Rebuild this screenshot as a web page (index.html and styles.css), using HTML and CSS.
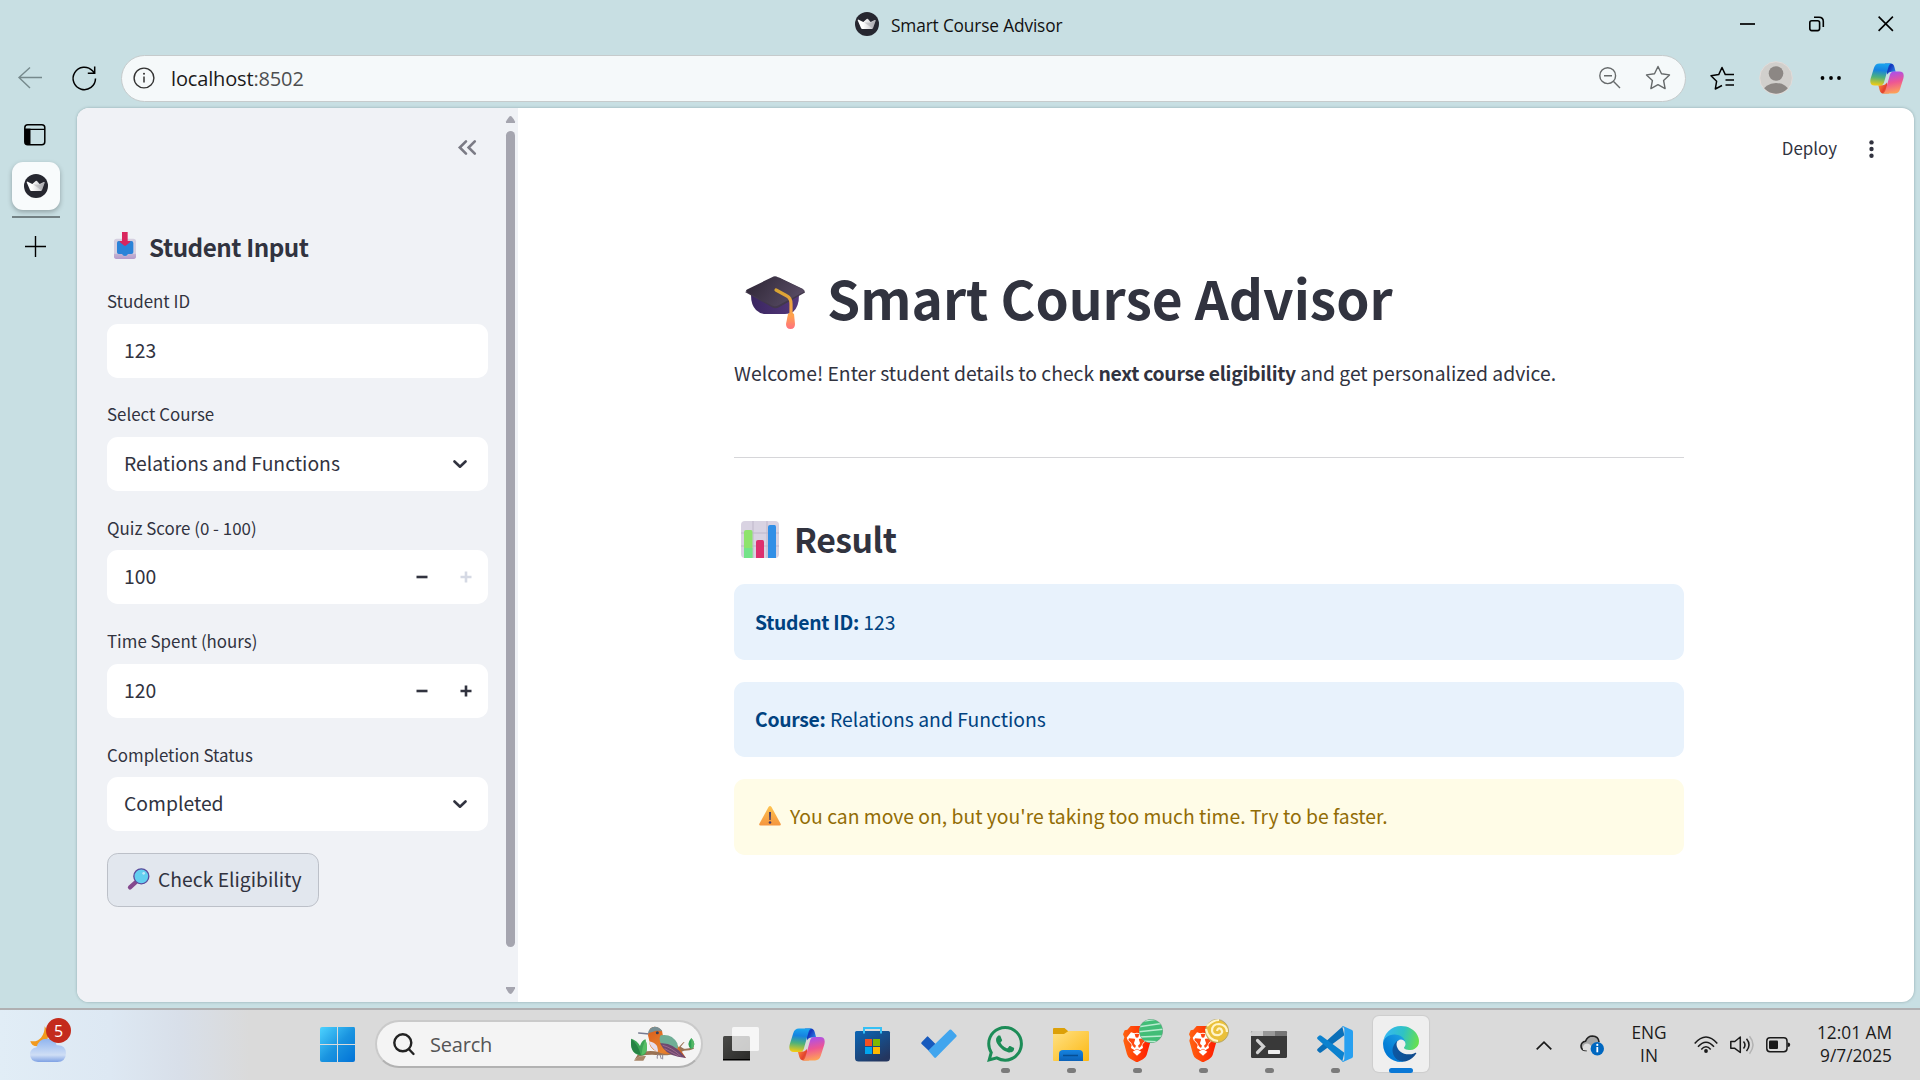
FILE: index.html
```html
<!DOCTYPE html>
<html lang="en">
<head>
<meta charset="utf-8">
<title>Smart Course Advisor</title>
<link rel="stylesheet" href="styles.css">
</head>
<body>
<svg class="defs" width="0" height="0">
  <defs>
    <linearGradient id="cp-a" x1="0.4" y1="0" x2="0.3" y2="1"><stop offset="0" stop-color="#1ba4ee"/><stop offset=".3" stop-color="#1683e0"/><stop offset=".62" stop-color="#4db17c"/><stop offset="1" stop-color="#f5cc10"/></linearGradient>
    <linearGradient id="cp-b" x1="0" y1="0" x2="1" y2=".6"><stop offset="0" stop-color="#1a5fe0"/><stop offset=".5" stop-color="#1537bd"/><stop offset="1" stop-color="#2b7fe6"/></linearGradient>
    <linearGradient id="cp-c" x1="0.6" y1="1" x2="0.4" y2="0"><stop offset="0" stop-color="#a64ff0"/><stop offset=".5" stop-color="#ee5693"/><stop offset="1" stop-color="#ffa653"/></linearGradient>
    <linearGradient id="cp-d" x1="0" y1="0" x2="1" y2=".6"><stop offset="0" stop-color="#f2a13c"/><stop offset=".5" stop-color="#e2412f"/><stop offset="1" stop-color="#fb7c36"/></linearGradient>
    <linearGradient id="crown" x1="0" y1="0" x2="1" y2="0"><stop offset=".3" stop-color="#fff"/><stop offset="1" stop-color="#b9b9be"/></linearGradient>
    <symbol id="copilot" viewBox="0 0 102 92">
      <path fill="url(#cp-b)" d="M45 1H62q8 0 11 10L77 26H64q-9 0-12 8z"/>
      <path fill="url(#cp-d)" transform="rotate(180 51 46)" d="M45 1H62q8 0 11 10L77 26H64q-9 0-12 8z"/>
      <path fill="url(#cp-a)" d="M66 1H28Q16 1 12 14L2 46Q-3 67 14 67H30q9 0 12-9L55 12Q58 1 66 1z"/>
      <path fill="url(#cp-c)" transform="rotate(180 51 46)" d="M66 1H28Q16 1 12 14L2 46Q-3 67 14 67H30q9 0 12-9L55 12Q58 1 66 1z"/>
    </symbol>
    <symbol id="streamlit" viewBox="0 0 72 72">
      <circle cx="36" cy="36" r="36" fill="#262730"/>
      <path fill="url(#crown)" d="M8 25q0-3 3-2l14 7 10-9q2-2 4 0l8 9 12-6q4-1 3 2l-8 22q-1 3-4 3H22q-3 0-4-3z"/>
      <path fill="#8b8b91" opacity=".35" d="M27 31l27 19 7-24-15 6z"/>
    </symbol>
    <linearGradient id="br-g" x1="0" x2="1"><stop offset="0" stop-color="#ff6410"/><stop offset="1" stop-color="#ff1a00"/></linearGradient>
    <symbol id="brave" viewBox="0 0 84 108">
      <path fill="url(#br-g)" d="M23 0H63L72 11l8 1 4 13-3 9 2 10-12 43q-3 8-11 13L44 108Q42 109 38 107L22 98Q14 93 12 85L1 44l3-10-4-9 5-12 8-2z"/>
      <path fill="#fff" d="M24 19l10 3q8-3 16 0l10-3 13 16-3 8-11 12q-2 3 0 6l1 5-11 7q-4-4-7-5-3 1-7 5l-11-7 1-5q2-3 0-6L14 43l-3-8z"/>
      <path fill="#ff4a10" d="M18 37l17 1q2 1 1 4l-3 9q0 3 3 5l3 3-3 7q-7-4-8-8-1-4-4-8L16 42zM66 37l-17 1q-2 1-1 4l3 9q0 3-3 5l-3 3 3 7q7-4 8-8 1-4 4-8l10-8z"/>
      <path fill="#ff4310" d="M35 24q7-2 14 0l-3 10q-4 2-8 0z"/>
      <path fill="#fff" d="M29 77l13-7 13 7-13 12z"/>
    </symbol>
    <symbol id="minus" viewBox="0 0 12 12"><path d="M.5 4.700h11v2.600H.5z" fill="currentColor"/></symbol>
    <symbol id="plus" viewBox="0 0 12 12"><path d="M4.700.500h2.600v4.200h4.200v2.600H7.300v4.200H4.700V7.300H.5V4.700h4.200z" fill="currentColor"/></symbol>
    <symbol id="chev" viewBox="0 0 14 9"><path d="M1.500 1.500 7 6.700l5.500-5.200" fill="none" stroke="currentColor" stroke-width="2.600" stroke-linecap="round" stroke-linejoin="round"/></symbol>
  </defs>
</svg>

<header class="titlebar">
  <svg class="i24"><use href="#streamlit"/></svg>
  <span class="tab-title">Smart Course Advisor</span>
  <div class="win-buttons">
    <svg width="16" height="16"><path d="M0 8h15" stroke="#000" stroke-width="1.700"/></svg>
    <svg width="16" height="16" fill="none" stroke="#000" stroke-width="1.600"><rect x=".8" y="4.800" width="9.800" height="9.800" rx="2"/><path d="M5 1.200h5q4.300 0 4.300 4.300V11"/></svg>
    <svg width="16" height="16"><path d="M.6.600l14.300 14.300M14.900.600.600 14.900" stroke="#000" stroke-width="1.600"/></svg>
  </div>
</header>

<div class="toolbar">
  <svg class="back" width="24" height="22" fill="none" stroke="#76898c" stroke-width="1.400"><path d="M24 10.500H1M12 .6 1 10.500 12 21"/></svg>
  <svg class="reload" width="25" height="25" fill="none" stroke="#000" stroke-width="1.500"><path d="M23.500 12.500A11.200 11.200 0 1 1 20.500 4.800L22.500 7M22.700.600v6.700h-6.900"/></svg>
  <div class="address">
    <svg width="22" height="22"><circle cx="11" cy="11" r="9.900" fill="none" stroke="#333" stroke-width="1.400"/><path d="M11 9.500v6" stroke="#333" stroke-width="1.500"/><circle cx="11" cy="6.800" r="1" fill="#333"/></svg>
    <span class="url">localhost<span class="port">:8502</span></span>
    <svg class="zoom" width="22" height="22" fill="none" stroke="#666a6b" stroke-width="1.400"><circle cx="8.700" cy="8.700" r="7.900"/><path d="M5 8.700h8M14.300 14.300 21 21"/></svg>
    <svg width="26" height="26" viewBox="0 0 26 26" fill="none" stroke="#666a6b" stroke-width="1.400" stroke-linejoin="round"><path d="M13 1.500l3.500 7.300 8 1.100-5.900 5.600 1.500 8.100-7.100-3.900-7.100 3.900 1.500-8.100L1.500 9.900l8-1.100z"/></svg>
  </div>
  <div class="tools">
    <svg width="26" height="26" viewBox="0 0 26 26" fill="none" stroke="#000" stroke-width="1.500" stroke-linejoin="round"><path d="M13 20.500 6.300 24l1.300-7.700L2 10.700l7.700-1.100L13 2.500l3.300 7.100H25M16.500 15H25M16.500 20H25"/></svg>
    <svg width="34" height="34"><defs><clipPath id="av"><circle cx="17" cy="17" r="15.700"/></clipPath></defs><circle cx="17" cy="17" r="16.300" fill="#d1cfcc" stroke="#e2dcda"/><circle cx="17" cy="12.500" r="7.300" fill="#8c8784"/><ellipse cx="17" cy="31" rx="13" ry="9" fill="#8c8784" clip-path="url(#av)"/></svg>
    <svg width="22" height="6"><circle cx="2.500" cy="3" r="1.900"/><circle cx="11" cy="3" r="1.900"/><circle cx="19" cy="3" r="1.900"/></svg>
    <svg width="34" height="31"><use href="#copilot"/></svg>
  </div>
</div>

<div class="body">
  <nav class="rail">
    <svg width="22" height="22"><rect x=".8" y=".8" width="20" height="20" rx="3" fill="none" stroke="#000" stroke-width="1.500"/><path d="M1 4.500h5.500V21H4Q1 21 1 18zM1 4.700h20v1.200H1z"/></svg>
    <div class="tab-tile"><svg class="i24"><use href="#streamlit"/></svg></div>
    <div class="tab-line"></div>
    <svg width="21" height="21"><path d="M10.500 0v21M0 10.500h21" stroke="#000" stroke-width="1.400"/></svg>
  </nav>

  <div class="page">
    <aside class="sidebar">
      <div class="side-content">
        <div class="collapse"><svg width="18" height="15" fill="none" stroke="#7b7b85" stroke-width="2.600" stroke-linecap="round"><path d="M8 1.300 1.800 7.500 8 13.700M16.800 1.300 10.600 7.500l6.200 6.200"/></svg></div>
        <h2 class="side-title">
          <svg width="22" height="27" viewBox="0 0 66 81"><defs><linearGradient id="tr" x1="0" y1="0" x2="0" y2="1"><stop offset=".7" stop-color="#d5cfe0"/><stop offset="1" stop-color="#b497cf"/></linearGradient></defs><rect y="20" width="66" height="61" rx="8" fill="url(#tr)"/><path fill="#2a83d8" d="M14 27h38q6 0 6 6v28q0 5-6 5H42q-2 6-9 6t-9-6H14q-5 0-5-5V33q0-6 5-6z"/><path fill="#b6a0c8" d="M0 66h24q2 9 9 9t9-9h24v7q0 8-8 8H8q-8 0-8-8z" opacity=".5"/><path fill="#d9265e" d="M24 0h17v27h7q2 2 0 4L35 41q-2 1-4 0L18 31q-2-3 0-4h6z"/></svg>
          Student Input
        </h2>
        <div class="field"><label>Student ID</label><div class="control">123</div></div>
        <div class="field"><label>Select Course</label><div class="control select">Relations and Functions<svg width="14" height="9"><use href="#chev"/></svg></div></div>
        <div class="field"><label>Quiz Score (0 - 100)</label><div class="control number">100<span class="steps"><svg width="12" height="12"><use href="#minus"/></svg><svg class="off" width="12" height="12"><use href="#plus"/></svg></span></div></div>
        <div class="field"><label>Time Spent (hours)</label><div class="control number">120<span class="steps"><svg width="12" height="12"><use href="#minus"/></svg><svg width="12" height="12"><use href="#plus"/></svg></span></div></div>
        <div class="field"><label>Completion Status</label><div class="control select">Completed<svg width="14" height="9"><use href="#chev"/></svg></div></div>
        <button class="check">
          <svg width="22" height="22" viewBox="0 0 66 66"><path d="M6 58 24 42" stroke="#85498d" stroke-width="13" stroke-linecap="round"/><circle cx="40" cy="25" r="22.500" fill="#62cff0" stroke="#5a4b9c" stroke-width="4"/><circle cx="47" cy="16" r="4" fill="#bdeafa"/></svg>
          Check Eligibility
        </button>
      </div>
      <div class="scroll">
        <svg width="9" height="7"><path d="M4.500 0Q6 0 9 5.500V7H0V5.500Q3 0 4.500 0z" fill="#a5a5af"/></svg>
        <div class="thumb"></div>
        <svg width="9" height="7"><path d="M4.500 7Q6 7 9 1.500V0H0v1.500Q3 7 4.500 7z" fill="#a5a5af"/></svg>
      </div>
    </aside>

    <main class="main">
      <div class="topline">
        <span>Deploy</span>
        <svg width="5" height="18" fill="#31333f"><circle cx="2.500" cy="2.400" r="2.200"/><circle cx="2.500" cy="9" r="2.200"/><circle cx="2.500" cy="15.700" r="2.200"/></svg>
      </div>
      <div class="column">
        <h1>
          <svg width="60" height="53" viewBox="0 0 60 53"><defs><linearGradient id="cap1" x1="0" y1="0" x2="1" y2=".4"><stop offset="0" stop-color="#2c2433"/><stop offset="1" stop-color="#564a62"/></linearGradient><linearGradient id="cap2" x1="0" x2="1"><stop offset="0" stop-color="#3a2660"/><stop offset="1" stop-color="#55397c"/></linearGradient><linearGradient id="tas" gradientUnits="userSpaceOnUse" x1="0" y1="14" x2="0" y2="53"><stop offset="0" stop-color="#d7a432"/><stop offset=".65" stop-color="#ffa24c"/><stop offset="1" stop-color="#ff7280"/></linearGradient></defs><path fill="url(#cap2)" d="M6 19h48q0 12-6 17-3 2-8 2H21q-6 0-10-4-5-5-5-15z"/><path fill="#42384b" d="M0 16 27.500 31.500q3 1.600 6 0L60 16.500Q60 14 57 12.500L34 1.500z"/><path fill="url(#cap1)" d="M2 13.500 27 1.200Q30-.5 33 1.200L58 13.500q2 1.300 0 2.700L33 29.500q-3 1.500-6 0L2 16q-2-1.200 0-2.500z"/><path d="M31 14l11 6q4 2 4 8v11" fill="none" stroke="url(#tas)" stroke-width="3.200" stroke-linecap="round"/><path fill="url(#tas)" d="M43 38q3-3 6 0l1 10q0 5-4.500 5T41 48z"/></svg>
          Smart Course Advisor
        </h1>
        <p>Welcome! Enter student details to check <b>next course eligibility</b> and get personalized advice.</p>
        <hr>
        <h2 class="result">
          <svg width="38" height="37"><rect width="38" height="37" rx="4" fill="#d9d3e2"/><path d="M0 12h38M0 25h38M12 0v37M26 0v37" stroke="#bfb7ca"/><path d="M3 11q0-2 2-2h5q1.500 0 1.500 2v26H3z" fill="#8ee36c"/><path d="M15 21q0-2 2-2h4.500q1.500 0 1.500 2v16h-8z" fill="#dd2f6e"/><path d="M27 6q0-2 2-2h4.500Q35 4 35 6v31h-8z" fill="#318fe6"/><path d="M3 27h8.500v10H3z" fill="#6ae394" opacity=".7"/></svg>
          Result
        </h2>
        <div class="alerts">
          <div class="alert info"><span><b>Student ID:</b> 123</span></div>
          <div class="alert info"><span><b>Course:</b> Relations and Functions</span></div>
          <div class="alert warn">
            <svg width="22" height="20"><defs><linearGradient id="wn" x1="0" y1="0" x2="0" y2="1"><stop offset="0" stop-color="#fec34f"/><stop offset="1" stop-color="#f5953f"/></linearGradient></defs><path fill="url(#wn)" d="M9.500 1q1.500-2 3 0l9 16.500q1 2-1 2h-19q-2 0-1-2z"/><path d="M10 6h2l-.3 8h-1.400z" fill="#433b6b"/><circle cx="11" cy="16.500" r="1.300" fill="#433b6b"/></svg>
            You can move on, but you're taking too much time. Try to be faster.
          </div>
        </div>
      </div>
    </main>
  </div>
</div>

<footer class="taskbar">
  <div class="weather">
    <svg width="36" height="37" viewBox="0 0 108 111"><defs><linearGradient id="cl" x1="0" y1="0" x2="0" y2="1"><stop offset="0" stop-color="#8fb4ef"/><stop offset=".7" stop-color="#cfdef5"/><stop offset="1" stop-color="#7ea1e4"/></linearGradient></defs><path fill="#f29a1d" d="M44 4q16 20 8 40T22 64Q4 64 1 48q20 4 32-10T44 4z"/><path fill="url(#cl)" d="M24 111Q0 109 0 88q1-18 20-21 5-27 33-26 22 1 27 20 27-2 28 24-1 26-26 26z"/></svg>
    <span class="badge">5</span>
  </div>
  <div class="apps">
    <svg class="start" width="36" height="36"><defs><linearGradient id="wg" gradientUnits="userSpaceOnUse" x1="0" y1="0" x2="36" y2="36"><stop offset="0" stop-color="#4dd3ff"/><stop offset=".5" stop-color="#1a94e0"/><stop offset="1" stop-color="#0070d6"/></linearGradient></defs><path fill="url(#wg)" d="M2 0h15v17H0V2Q0 0 2 0zM18 0h16q1 0 1 2v15H18zM0 18h17v17H2Q0 35 0 33zM18 18h17v15q0 2-2 2H18z"/></svg>
    <div class="search">
      <svg width="22" height="23" fill="none" stroke="#222" stroke-width="2.400" stroke-linecap="round"><circle cx="9.800" cy="9.800" r="8.500"/><path d="M16.200 16.500 20.500 21"/></svg>
      <span>Search</span>
      <svg class="bird" width="66" height="36" viewBox="0 0 198 108"><defs><linearGradient id="bd" x1="0" y1="0" x2="1" y2="1"><stop offset="0" stop-color="#d95d1b"/><stop offset=".6" stop-color="#e8822d"/><stop offset="1" stop-color="#b54c22"/></linearGradient></defs><path fill="#9a7354" d="M12 104 28 91q30-7 60-3 50 0 74-14 18 0 30-6l-2-5q-18 7-28 5l-10-6 12-14-4 1-18 19q-30 10-54 9-40-5-62 4z"/><path fill="#a88668" d="M12 104l16-13 20-1-8 14z"/><path fill="#3ba455" d="M4 38q18 6 26 22 4-15 16-20 10 28 0 44-10 8-22 2Q-2 78 4 38z"/><path fill="#268244" d="M4 38q22 20 28 48-34-4-28-48z"/><path fill="#57bd65" d="M46 40Q38 60 34 87q26-5 12-47z"/><path fill="#2fa055" d="M184 36q18 20 0 34-18-14 0-34z"/><path fill="#56b866" d="M184 36v34q18-14 0-34z"/><path d="M26 21 58 24" stroke="#767b91" stroke-width="4" stroke-linecap="round"/><path fill="url(#bd)" d="M54 28 60 8Q76-6 96 14q2 12 4 20 30 0 48 32l20 30-42-14q-24 8-46-6Q56 66 58 44z"/><path fill="#e6ddeb" d="M57 46q18 4 24 14 4 12 2 18Q60 66 57 46z"/><path fill="#778f94" d="M54 22Q58 2 74 2t23 14q-16-4-30 2z"/><circle cx="82" cy="20" r="4.500" fill="#31405c"/><path fill="#6fae96" d="M92 28q34-6 50 24l2 16q-32-6-50-14-10-14-2-26z"/><path fill="#6f496f" d="M90 52q38-4 70 36l8 8-24-4Q106 86 90 52z"/><path d="M98 58q26 6 54 32M104 68l42 22" stroke="#a76f93" stroke-width="2.500" fill="none"/><path d="M84 84q-4 10-2 14M98 86v14M90 86l4 13" stroke="#8b8495" stroke-width="3" fill="none"/></svg>
    </div>
    <div class="app"><svg width="36" height="36"><defs><linearGradient id="tk" x1="0" y1="0" x2="1" y2="1"><stop offset="0" stop-color="#4a4a48"/><stop offset="1" stop-color="#2a2a28"/></linearGradient></defs><rect x="0" y="10" width="27" height="24" rx="1.500" fill="url(#tk)"/><path d="M0 33h27v1.500H0z"/><rect x="9" y="1" width="27" height="24" rx="1.500" fill="#fff" opacity=".75"/></svg></div>
    <div class="app"><svg width="36" height="33"><use href="#copilot"/></svg></div>
    <div class="app"><svg width="36" height="36"><defs><linearGradient id="st" x1="0" y1="0" x2=".7" y2="1"><stop offset="0" stop-color="#0a65b5"/><stop offset="1" stop-color="#24365f"/></linearGradient></defs><path fill="url(#st)" d="M1.500 5h32Q35 5 35 6.500V32q0 3.500-3.500 3.500h-28Q0 35.500 0 32V6.500Q0 5 1.500 5z"/><path d="M9 7.500V2h17v5.500" fill="none" stroke="#35c0f5" stroke-width="2"/><path fill="#f35022" d="M10 13h7v7h-7z"/><path fill="#7fb900" d="M18 13h7v7h-7z"/><path fill="#01a5ef" d="M10 21h7v7h-7z"/><path fill="#ffb800" d="M18 21h7v7h-7z"/></svg></div>
    <div class="app"><svg width="36" height="30"><path fill="#185abd" d="M7.200 7.700 14.500 15 7.800 21.700.6 15q-.9-.8 0-1.700l5.300-5.600q.7-.700 1.300 0z"/><path fill="#41a5ee" d="M28.600.800q.9-.8 1.700 0l5 5.300q.9.900 0 1.700L15 28.500q-.9.900-1.700 0L7.600 22q0-.5.300-1z"/></svg></div>
    <div class="app"><svg width="36" height="36" viewBox="0 0 24 24"><path fill="#1c8c57" d="M17.472 14.382c-.297-.149-1.758-.867-2.030-.967-.273-.099-.471-.148-.67.150-.197.297-.767.966-.940 1.164-.173.199-.347.223-.644.075-.297-.150-1.255-.463-2.390-1.475-.883-.788-1.480-1.761-1.653-2.059-.173-.297-.018-.458.130-.606.134-.133.298-.347.446-.520.149-.174.198-.298.298-.497.099-.198.050-.371-.025-.520-.075-.149-.669-1.612-.916-2.207-.242-.579-.487-.5-.669-.510-.173-.008-.371-.010-.570-.010-.198 0-.520.074-.792.372-.272.297-1.040 1.016-1.040 2.479 0 1.462 1.065 2.875 1.213 3.074.149.198 2.096 3.200 5.077 4.487.709.306 1.262.489 1.694.625.712.227 1.360.195 1.871.118.571-.085 1.758-.719 2.006-1.413.248-.694.248-1.289.173-1.413-.074-.124-.272-.198-.570-.347m-5.421 7.403h-.004a9.870 9.870 0 0 1-5.031-1.378l-.361-.214-3.741.982.998-3.648-.235-.374a9.860 9.860 0 0 1-1.510-5.260c.001-5.450 4.436-9.884 9.888-9.884 2.640 0 5.122 1.030 6.988 2.898a9.825 9.825 0 0 1 2.893 6.994c-.003 5.450-4.437 9.884-9.885 9.884m8.413-18.297A11.815 11.815 0 0 0 12.050 0C5.495 0 .160 5.335.157 11.892c0 2.096.547 4.142 1.588 5.945L.057 24l6.305-1.654a11.882 11.882 0 0 0 5.683 1.448h.005c6.554 0 11.890-5.335 11.893-11.893a11.821 11.821 0 0 0-3.480-8.413Z"/></svg><i></i></div>
    <div class="app"><svg width="36" height="34"><defs><linearGradient id="fo" x1="0" y1="0" x2="1" y2="1"><stop offset="0" stop-color="#ffe184"/><stop offset="1" stop-color="#fcb813"/></linearGradient><linearGradient id="fb" x1="0" y1="0" x2="0" y2="1"><stop offset="0" stop-color="#1583e0"/><stop offset="1" stop-color="#0c62b8"/></linearGradient></defs><path fill="#dca008" d="M1 1h10.500l4 3.500V9H0V2q0-1 1-1z"/><path fill="url(#fo)" d="M0 7h11l4.500-3H35q1 0 1 1v28q0 1-1 1H1q-1 0-1-1z"/><path fill="url(#fb)" d="M6 34V27q0-4 4-4h16q4 0 4 4v7z"/><path d="M10 28.500h15" stroke="#064f94" stroke-width="1.500"/></svg><i></i></div>
    <div class="app"><svg width="28" height="36"><use href="#brave"/></svg>
      <svg class="ball" width="24" height="24"><defs><clipPath id="b1"><circle cx="12" cy="12" r="11.500"/></clipPath></defs><circle cx="12" cy="12" r="12" fill="#7fa290"/><g clip-path="url(#b1)"><path fill="#42bd77" d="M0 0h24v24H0z"/><path d="M-2 3 26-1M-2 8 26 4M-2 13 26 10M-2 18 26 17M-2 22 26 23" stroke="#b9ecd0" stroke-width="1.500"/></g></svg><i></i></div>
    <div class="app"><svg width="28" height="36"><use href="#brave"/></svg>
      <svg class="ball" width="24" height="24"><circle cx="12" cy="12" r="11.500" fill="#eac03a" stroke="#b3a66e"/><path d="M12 12q1-4 4-2 3 4-2 6-6 1-7-4 0-7 7-7 8 1 8 8M1 10q2 11 12 12M2 7q6-6 12-6" fill="none" stroke="#fff4c9" stroke-width="2.200"/></svg><i></i></div>
    <div class="app"><svg width="36" height="27"><rect width="36" height="27" rx="1.500" fill="#393939"/><path d="M1.500 0H12v5H0V1.500Q0 0 1.500 0z" fill="#ccc"/><path d="M12 0h12v5H12z" fill="#999"/><path d="M24 0h10.500Q36 0 36 1.500V5H24z" fill="#757575"/><path d="M6.500 9.500 12.500 15.500 6.500 21.500" fill="none" stroke="#d2d2d2" stroke-width="3.200" stroke-linecap="round"/><rect x="17" y="19" width="12" height="4" rx=".7" fill="#eee"/></svg><i></i></div>
    <div class="app"><svg width="36" height="36" viewBox="0 0 108 108"><path fill="#0b6fb8" d="M2 68 76 2 82 28 13 79q-4 3-7 0l-5-5q-2-3 1-6z"/><path fill="#0c82cf" d="M2 40 76 106 82 80 13 29q-4-3-7 0l-5 5q-2 3 1 6z"/><path fill="#28a0f0" d="M78 0 105 12q3 2 3 5v74q0 4-3 5l-27 12q-3-1-4-4 7 3 8-5V9q-1-8-8-5 1-3 4-4z"/></svg><i></i></div>
    <div class="app active"><svg width="36" height="36" viewBox="0 0 256 256"><defs><linearGradient id="e1" gradientUnits="userSpaceOnUse" x1="63" y1="177" x2="241" y2="177"><stop offset="0" stop-color="#0c59a4"/><stop offset="1" stop-color="#114a8b"/></linearGradient><linearGradient id="e2" gradientUnits="userSpaceOnUse" x1="157" y1="100" x2="46" y2="221"><stop offset="0" stop-color="#1b9de2"/><stop offset=".2" stop-color="#1595df"/><stop offset=".7" stop-color="#0680d7"/><stop offset="1" stop-color="#0078d4"/></linearGradient><linearGradient id="e3" gradientUnits="userSpaceOnUse" x1="30" y1="50" x2="255" y2="110"><stop offset="0" stop-color="#35b8ef"/><stop offset=".5" stop-color="#2fc2c4"/><stop offset="1" stop-color="#66e04f"/></linearGradient></defs><g transform="translate(-4.630 -4.920)"><path fill="url(#e1)" d="M235.680 195.460a93.730 93.730 0 0 1-10.540 4.710 101.870 101.870 0 0 1-35.900 6.460c-47.320 0-88.540-32.550-88.540-74.320A31.480 31.480 0 0 1 117.130 105c-42.800 1.800-53.800 46.400-53.800 72.530 0 73.880 68.090 81.370 82.760 81.370 7.910 0 19.840-2.300 27-4.560l1.310-.440a128.340 128.340 0 0 0 66.600-52.800 4 4 0 0 0-5.320-5.640z"/><path fill="url(#e2)" d="M110.340 246.340A79.200 79.200 0 0 1 87.600 225a80.720 80.720 0 0 1 29.530-120c3.120-1.470 8.450-4.130 15.540-4a32.350 32.350 0 0 1 25.690 13 31.880 31.880 0 0 1 6.360 18.660c0-.210 24.460-79.600-80-79.600-43.900 0-80 41.660-80 78.210a130.150 130.150 0 0 0 12.110 56 128 128 0 0 0 156.380 67.110 75.550 75.550 0 0 1-62.780-8.040z"/><path fill="url(#e3)" d="M156.940 153.780c-.810 1.050-3.300 2.500-3.300 5.660 0 2.610 1.700 5.120 4.720 7.230 14.380 10 41.490 8.680 41.560 8.680a59.560 59.560 0 0 0 30.270-8.350 61.380 61.380 0 0 0 30.430-52.880c.260-22.410-8-37.310-11.340-43.910C228.090 28.760 182.350 4.920 132.610 4.920a128 128 0 0 0-128 126.200c.480-36.540 36.800-66.050 80-66.050 3.500 0 23.460.340 42 10.070 16.340 8.580 24.900 18.940 30.850 29.210 6.180 10.670 7.280 24.150 7.280 29.520s-2.740 13.330-7.800 19.910z"/></g></svg><i></i></div>
  </div>
  <div class="tray">
    <svg width="16" height="9"><path d="M.7 8.300 8 1.200l7.300 7.100" fill="none" stroke="#1a1a1a" stroke-width="1.700"/></svg>
    <svg class="cloud" width="25" height="21"><path d="M7 15.500H5q-4-.5-4-4.700Q1.500 7 5.500 6.300 7.500 1 12.500 1q6 .3 6.500 6" fill="#a6a6a6" stroke="#222" stroke-width="1.600"/><path d="M3 15q-1-6 4-6.500 3 0 5 4L9 16z" fill="#dedede"/><circle cx="17.300" cy="13.700" r="6.700" fill="#0067c0"/><path d="M17.300 12v5.300" stroke="#fff" stroke-width="1.800"/><circle cx="17.300" cy="9.900" r="1.100" fill="#fff"/></svg>
    <div class="lang"><span>ENG</span><span>IN</span></div>
    <svg class="wifi" width="24" height="18" fill="none" stroke="#1a1a1a" stroke-width="1.500"><path d="M.7 7.500q11.300-13 22.600 0M4 10.700q8-9 16 0M7.300 13.500q4.700-5.500 9.400 0"/><circle cx="12" cy="15" r="1.900" fill="#1a1a1a" stroke="none"/></svg>
    <svg class="spk" width="25" height="20" fill="none" stroke="#1a1a1a" stroke-width="1.500" stroke-linejoin="round"><path d="M.8 6.500h4L10.300 2v15.500L4.800 13.300h-4zM13.500 6.500q3 3.500 0 7M16.500 3.700q5 6 0 12.400"/><path d="M19.500 1.200q7 8.500 0 17.500" stroke="#b3b3b3"/></svg>
    <svg class="bat" width="25" height="16"><rect x=".8" y=".8" width="20.200" height="14" rx="3.200" fill="none" stroke="#1a1a1a" stroke-width="1.500"/><rect x="3" y="3.500" width="9" height="8.600" rx="1" fill="#1a1a1a"/><path d="M21.700 5.500q2.500 0 2.500 2.300t-2.500 2.300z" fill="#1a1a1a"/></svg>
    <div class="clock"><span>12:01 AM</span><span>9/7/2025</span></div>
  </div>
</footer>
</body>
</html>
```
FILE: styles.css
```css
* { box-sizing: border-box; margin: 0; padding: 0; }
body {
  width: 1920px; height: 1080px; overflow: hidden;
  display: flex; flex-direction: column;
  background: #c8dfe3;
  font-family: "Noto Sans CJK SC", "Noto Sans", sans-serif;
  color: #31333f;
}
svg { display: block; flex: none; overflow: visible; }
.defs { height: 0; }
.i24 { width: 24px; height: 24px; }

.titlebar { height: 48px; flex: none; display: flex; align-items: center; padding-left: 855px; }
.tab-title {
  margin-left: 12px; padding-top: 2px; color: #111; white-space: nowrap;
  font: 17.300px "Open Sans", "Noto Sans", sans-serif; letter-spacing: -.15px;
}
.win-buttons { margin-left: auto; height: 48px; display: grid; grid-template-columns: repeat(3, 69px); place-items: center; }

.toolbar { height: 60px; flex: none; display: flex; align-items: center; padding: 0 0 0 18px; }
.reload { margin-left: 30px; }
.address {
  width: 1565px; height: 47px; margin-left: 24px; padding: 0 14px 0 11px;
  display: flex; align-items: center;
  background: #f5f9fa; border: 1px solid #c6cbcc; border-radius: 24px;
}
.url { margin-left: 16px; margin-right: auto; color: #1b1b1b; font: 20px "Open Sans", "Noto Sans", sans-serif; letter-spacing: -.15px; }
.port { color: #4d4f50; }
.zoom { margin-right: 24px; }
.tools { margin-left: 9px; display: grid; grid-template-columns: 54px 54px 55px 58px; place-items: center; }

.body { height: 900px; flex: none; display: flex; }
.rail { width: 77px; padding: 16px 0 0 12px; display: flex; flex-direction: column; }
.rail > svg:first-child { margin-left: 12px; }
.tab-tile {
  width: 48px; height: 48px; margin-top: 16px; border-radius: 11px;
  display: grid; place-items: center; background: #f8fbfc; box-shadow: 0 2px 5px rgba(0, 0, 0, .28);
}
.tab-line { width: 48px; height: 2px; margin: 6px 0 18px; background: #728083; }
.tab-line + svg { margin-left: 13px; }

.page {
  width: 1837px; height: 894px; display: flex; background: #fff;
  border-radius: 12px; overflow: hidden; box-shadow: 0 0 3px rgba(60, 90, 95, .4);
}
.sidebar { width: 441px; flex: none; display: flex; background: #f0f2f6; }
.side-content { width: 411px; padding-left: 30px; }
.collapse { height: 80px; padding: 32px 12px 0 0; display: flex; justify-content: flex-end; }
.side-title {
  height: 97.900px; display: flex; align-items: center; gap: 13px; padding: 20px 0 0 7px;
  font-size: 24.200px; font-weight: 600; line-height: 32px; letter-spacing: -.45px; white-space: nowrap;
}
.side-title svg { margin-top: -3px; }
.field { width: 381px; padding-bottom: 21.600px; }
.field label { display: flex; align-items: center; height: 37.800px; padding-bottom: 7.400px; font-size: 16.900px; line-height: 24px; }
.control {
  height: 54px; padding: 0 17px 2px; display: flex; align-items: center; justify-content: space-between;
  border-radius: 10.800px; background: #fff; font-size: 19.340px; line-height: 28px; white-space: nowrap;
}
.control svg { margin-top: 2px; }
.control.select { padding-right: 21px; }
.control.number { padding-right: 16px; }
.steps { display: flex; gap: 32px; }
.off { color: #d5d9e4; }
.check {
  width: 212px; height: 54px; padding: 0 0 2px 20px; display: flex; align-items: center; gap: 8px;
  border: 1px solid #bcc0c8; border-radius: 10.800px; background: #e2e7ee; color: inherit;
  font: 19.340px/28px "Noto Sans CJK SC", sans-serif; white-space: nowrap;
}
.scroll { width: 30px; padding: 8px 3px 8px 18px; display: flex; flex-direction: column; }
.thumb { width: 9px; height: 816px; margin: 8px 0 auto; border-radius: 5px; background: #a5a5af; }

.main { flex: 1; }
.topline { height: 81px; padding-right: 40px; display: flex; align-items: center; justify-content: flex-end; gap: 32px; font-size: 16.900px; line-height: 24px; }
.topline span { padding-bottom: 1px; }
.column { width: 950px; margin-left: 216px; }
h1 {
  height: 112px; margin-top: 55px; padding: 0 0 6px 11px; display: flex; align-items: center; gap: 22px;
  font-size: 53.200px; font-weight: 700; line-height: 64px; white-space: nowrap;
}
h1 svg { margin-top: 10px; }
p { height: 36px; font-size: 19.340px; line-height: 34px; white-space: nowrap; }
p b, .alert b { letter-spacing: -.27px; }
hr { margin-top: 65px; border: 0; height: 1px; background: #d6d6d9; }
.result {
  height: 126.400px; padding: 36px 0 0 7px; display: flex; align-items: center; gap: 15px;
  font-size: 33.800px; font-weight: 600; line-height: 44px; letter-spacing: -.5px;
}
.result svg { margin-top: 1px; }
.alerts { display: grid; gap: 21.800px; }
.alert { height: 75.600px; padding: 0 21px 1px; display: flex; align-items: center; border-radius: 10.800px; font-size: 19.340px; line-height: 28px; white-space: nowrap; }
.info { background: #e8f2fc; color: #004280; }
.warn { background: #fffce7; color: #926c05; padding-left: 25px; gap: 9px; }

.taskbar {
  height: 72px; flex: none; display: flex; position: relative; border-top: 2px solid #b0b0b2;
  background: linear-gradient(90deg, #e1edf6 0, #dde8f3 110px, #d8dfe9 180px, #dadada 250px);
  font-family: "Open Sans", "Noto Sans", sans-serif; color: #1a1a1a;
}
.weather { position: relative; width: 320px; padding: 15px 0 0 30px; }
.badge {
  position: absolute; left: 46px; top: 8px; width: 25px; height: 25px; border-radius: 50%;
  display: grid; place-items: center; background: #c42b1c; color: #fff; font-size: 16px; line-height: 1;
}
.apps { display: flex; align-items: flex-start; }
.start { margin-top: 17px; }
.search {
  width: 328px; height: 48px; margin: 10px 5px 0 19px; padding: 0 5px 0 16px; display: flex; align-items: center;
  border: 2px solid #cacaca; border-bottom-color: #b2b2b2; border-radius: 24px; background: #f4f4f4;
}
.search span { margin: 0 auto 0 15px; color: #555; font-size: 20px; letter-spacing: -.2px; }
.app { position: relative; width: 56px; height: 56px; margin: 6px 5px 0; display: grid; place-items: center; }
.app i { position: absolute; bottom: -1px; left: 24px; width: 9px; height: 5px; border-radius: 3px; background: #7b7b7b; }
.app.active { border-radius: 6px; background: #efefef; box-shadow: 0 0 1px 1px rgba(0, 0, 0, .06); }
.app.active i { left: 16px; width: 24px; background: #0a78d6; }
.ball { position: absolute; top: 3px; right: 2px; }
.tray { margin-left: auto; padding-right: 28px; display: flex; align-items: center; }
.cloud { margin-left: 28px; }
.lang, .clock { display: flex; flex-direction: column; padding-bottom: 2px; font-size: 17.300px; line-height: 23.500px; white-space: nowrap; }
.lang { width: 38px; margin-left: 25px; align-items: center; }
.wifi { margin-left: 26px; }
.spk { margin-left: 12px; }
.bat { margin-left: 11px; }
.clock { width: 78px; margin-left: 23px; align-items: flex-end; }
```
